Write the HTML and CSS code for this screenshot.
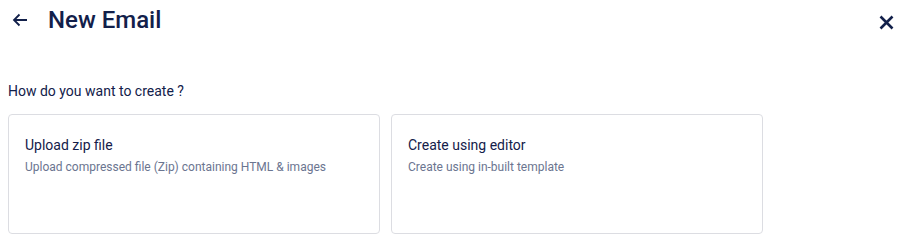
FILE: index.html
```html
<!DOCTYPE html>
<html lang="en">

<head>
    <meta charset="UTF-8">
    <meta name="viewport" content="width=device-width, initial-scale=1.0">
    <title>New Email</title>
    <link rel="stylesheet" href="styles.css">
</head>

<body>

    <div class="page">
        <div class="header">
            <span class="back">
                <svg width="16" height="14" viewBox="0 0 16 14">
                    <path d="M15 7H2M7.5 1.5L2 7l5.5 5.5" fill="none" stroke="#12204a" stroke-width="1.8" />
                </svg>
            </span>
            <h1 class="title">New Email</h1>
            <span class="close">
                <svg width="15" height="15" viewBox="0 0 15 15">
                    <path d="M1.5 1.5l12 12M13.5 1.5l-12 12" fill="none" stroke="#12204a" stroke-width="2.6" />
                </svg>
            </span>
        </div>

        <p class="question">How do you want to create ?</p>

        <div class="options">
            <div class="card">
                <div class="card-title">Upload zip file</div>
                <div class="card-desc">Upload compressed file (Zip) containing HTML &amp; images</div>
            </div>
            <div class="card">
                <div class="card-title">Create using editor</div>
                <div class="card-desc">Create using in-built template</div>
            </div>
        </div>
    </div>

</body>

</html>
```

FILE: styles.css
```css
* {
    margin: 0;
    padding: 0;
    box-sizing: border-box;
}

body {
    font-family: Roboto, "Liberation Sans", sans-serif;
    color: #12204a;
    background: #fff;
}

.page {
    padding: 0 8px;
}

.header {
    display: flex;
    align-items: center;
    height: 40px;
}

.back {
    display: flex;
    margin-left: 4px;
    margin-right: 20px;
}

.title {
    flex: 1;
    font-size: 24px;
    font-weight: 500;
    line-height: 40px;
}

.close {
    display: flex;
    margin-right: -1px;
    margin-top: 4px;
}

.question {
    margin-top: 41px;
    font-size: 14px;
    line-height: 20px;
}

.options {
    display: flex;
    gap: 11px;
    margin-top: 13px;
}

.card {
    width: 372px;
    height: 120px;
    padding: 20px 16px;
    border: 1px solid #dcdde2;
    border-radius: 4px;
}

.card-title {
    font-size: 14px;
    line-height: 20px;
    color: #14204a;
}

.card-desc {
    margin-top: 4px;
    font-size: 12px;
    line-height: 16px;
    color: #6b7590;
}
```
